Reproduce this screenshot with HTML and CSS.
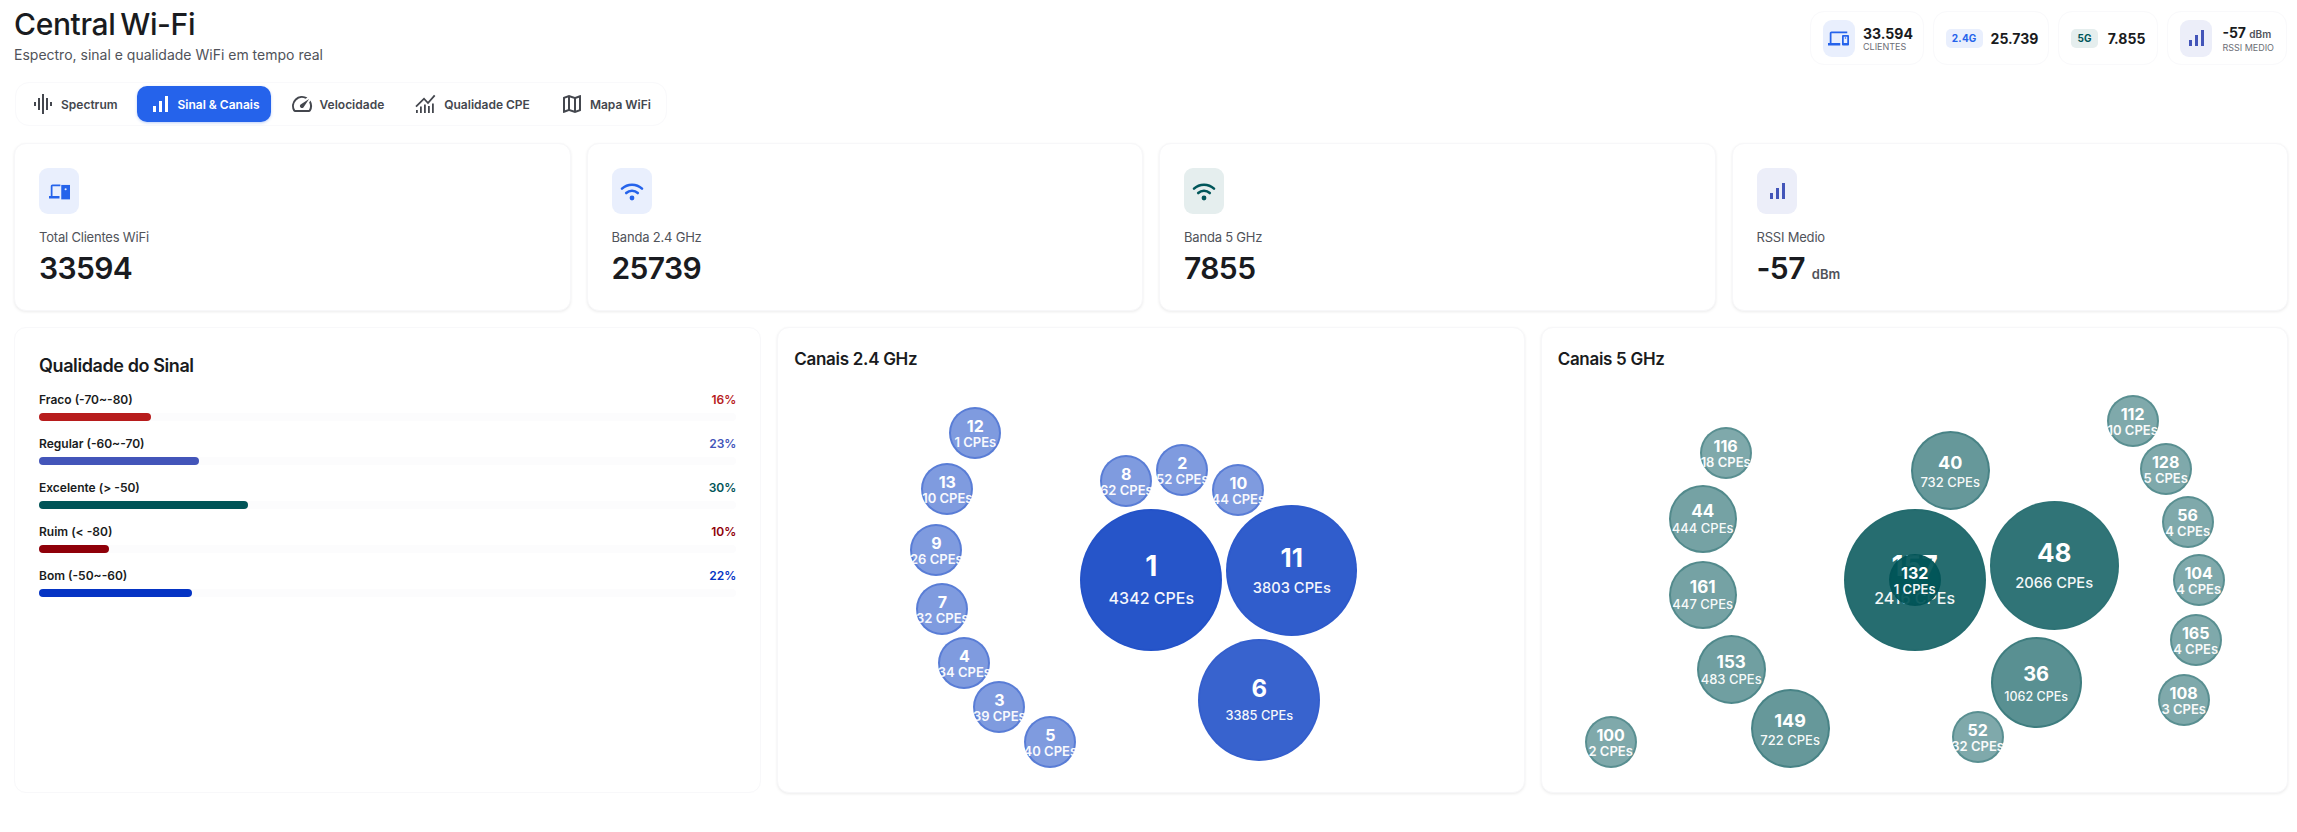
FILE: index.html
```html
<!DOCTYPE html>
<html lang="pt-BR">
<head>
  <meta charset="UTF-8">
  <title>Central Wi-Fi</title>
  <meta name="viewport" content="width=device-width, initial-scale=1.0">
  <link rel="stylesheet" href="styles.css">
</head>
<body>
<div class="page">

  <header class="top">
    <div class="top-title">
      <h1>Central Wi-Fi</h1>
      <p>Espectro, sinal e qualidade WiFi em tempo real</p>
    </div>
    <div class="top-stats">
      <div class="chip tight">
        <span class="chip-icon blue"><svg class="dev" viewBox="0 0 24 24"><path d="M4 6h18V4H4c-1.1 0-2 .9-2 2v11H0v3h14v-3H4V6zm19 2h-6c-.55 0-1 .45-1 1v10c0 .55.45 1 1 1h6c.55 0 1-.45 1-1V9c0-.55-.45-1-1-1zm-1 9h-4v-7h4v7z"/><circle cx="20" cy="11.5" r=".9"/></svg></span>
        <div><b>33.594</b><small>CLIENTES</small></div>
      </div>
      <div class="chip tight">
        <span class="chip-badge blue">2.4G</span>
        <b>25.739</b>
      </div>
      <div class="chip">
        <span class="chip-badge teal">5G</span>
        <b>7.855</b>
      </div>
      <div class="chip">
        <span class="chip-icon indigo"><svg viewBox="0 0 24 24"><path d="M17 4h3v16h-3V4zM5 14h3v6H5v-6zm6-5h3v11h-3V9z"/></svg></span>
        <div><b>-57 <em>dBm</em></b><small>RSSI MEDIO</small></div>
      </div>
    </div>
  </header>

  <nav class="tabs">
    <button class="tab"><svg viewBox="0 0 24 24"><path d="M7 18h2V6H7v12zm4 4h2V2h-2v20zm-8-8h2v-4H3v4zm12 4h2V6h-2v12zm4-8v4h2v-4h-2z"/></svg>Spectrum</button>
    <button class="tab active"><svg viewBox="0 0 24 24"><path d="M17 4h3v16h-3V4zM5 14h3v6H5v-6zm6-5h3v11h-3V9z"/></svg>Sinal &amp; Canais</button>
    <button class="tab"><svg viewBox="0 0 24 24"><path d="M20.38 8.57l-1.23 1.85a8 8 0 0 1-.22 7.58H5.07A8 8 0 0 1 15.58 6.85l1.85-1.23A10 10 0 0 0 3.35 19a2 2 0 0 0 1.72 1h13.85a2 2 0 0 0 1.74-1 10 10 0 0 0-.27-10.44zm-9.79 6.84a2 2 0 0 0 2.83 0l5.66-8.49-8.49 5.66a2 2 0 0 0 0 2.83z"/></svg>Velocidade</button>
    <button class="tab"><svg viewBox="0 0 24 24"><path d="M2 14.6l8-7.9 4 4.3 6.7-7.7" fill="none" stroke="currentColor" stroke-width="1.8"/><path d="M2 18h1.8v3H2zM6 14.5h1.8V21H6zM10 12.5h1.8V21H10zM14 14h1.8v7H14zM18 11.5h1.8V21H18z"/></svg>Qualidade CPE</button>
    <button class="tab"><svg viewBox="0 0 24 24"><path d="M20.5 3l-.16.03L15 5.1 9 3 3.36 4.9c-.21.07-.36.25-.36.48V20.5c0 .28.22.5.5.5l.16-.03L9 18.9l6 2.1 5.64-1.9c.21-.07.36-.25.36-.48V3.5c0-.28-.22-.5-.5-.5zM10 5.47l4 1.4v11.66l-4-1.4V5.47zm-5 .99l3-1.01v11.7l-3 1.16V6.46zm14 11.08l-3 1.01V6.86l3-1.16v11.84z"/></svg>Mapa WiFi</button>
  </nav>

  <section class="stat-row">
    <div class="card stat">
      <span class="stat-icon blue"><svg class="dev" viewBox="0 0 24 24"><path d="M4 6h9V4H4c-1.1 0-2 .9-2 2v11H0v3h12v-3H4V6z"/><path d="M14 4.5h10V21H14z"/><circle cx="19" cy="9.500" r="1.200" fill="#e9effd"/></svg></span>
      <div class="stat-label">Total Clientes WiFi</div>
      <div class="stat-value">33594</div>
    </div>
    <div class="card stat">
      <span class="stat-icon blue"><svg viewBox="0 0 24 24"><path class="arc" d="M2 9.6c5.600-5.200 14.400-5.200 20 0M6.200 14c3.300-3 8.300-3 11.600 0"/><circle cx="12" cy="19" r="2.400"/></svg></span>
      <div class="stat-label">Banda 2.4 GHz</div>
      <div class="stat-value">25739</div>
    </div>
    <div class="card stat">
      <span class="stat-icon teal"><svg viewBox="0 0 24 24"><path class="arc" d="M2 9.6c5.600-5.200 14.400-5.200 20 0M6.200 14c3.300-3 8.300-3 11.600 0"/><circle cx="12" cy="19" r="2.400"/></svg></span>
      <div class="stat-label">Banda 5 GHz</div>
      <div class="stat-value">7855</div>
    </div>
    <div class="card stat">
      <span class="stat-icon indigo"><svg viewBox="0 0 24 24"><path d="M17 4h3v16h-3V4zM5 14h3v6H5v-6zm6-5h3v11h-3V9z"/></svg></span>
      <div class="stat-label">RSSI Medio</div>
      <div class="stat-value">-57 <em>dBm</em></div>
    </div>
  </section>

  <section class="panel-row">
    <div class="card quality">
      <h2>Qualidade do Sinal</h2>
      <div class="q-row fraco"><div class="q-head"><span>Fraco (-70~-80)</span><b>16%</b></div><div class="q-track"><div class="q-bar" style="width:16%"></div></div></div>
      <div class="q-row regular"><div class="q-head"><span>Regular (-60~-70)</span><b>23%</b></div><div class="q-track"><div class="q-bar" style="width:23%"></div></div></div>
      <div class="q-row excelente"><div class="q-head"><span>Excelente (&gt; -50)</span><b>30%</b></div><div class="q-track"><div class="q-bar" style="width:30%"></div></div></div>
      <div class="q-row ruim"><div class="q-head"><span>Ruim (&lt; -80)</span><b>10%</b></div><div class="q-track"><div class="q-bar" style="width:10%"></div></div></div>
      <div class="q-row bom"><div class="q-head"><span>Bom (-50~-60)</span><b>22%</b></div><div class="q-track"><div class="q-bar" style="width:22%"></div></div></div>
    </div>

    <div class="card channels">
      <h3>Canais 2.4 GHz</h3>
      <div class="bubbles band24">
        <div class="bubble b-xl" style="--x:286px;--y:135px;--d:142px;--a:.85"><b>1</b><span>4342 CPEs</span></div>
        <div class="bubble b-lg" style="--x:432px;--y:131px;--d:131px;--a:.81"><b>11</b><span>3803 CPEs</span></div>
        <div class="bubble b-ml" style="--x:404px;--y:265px;--d:122px;--a:.78"><b>6</b><span>3385 CPEs</span></div>
        <div class="bubble" style="--x:155px;--y:33px;--d:52px;--a:.5"><b>12</b><span>1 CPEs</span></div>
        <div class="bubble" style="--x:127px;--y:89px;--d:52px;--a:.5"><b>13</b><span>10 CPEs</span></div>
        <div class="bubble" style="--x:116px;--y:150px;--d:52px;--a:.5"><b>9</b><span>26 CPEs</span></div>
        <div class="bubble" style="--x:122px;--y:209px;--d:52px;--a:.5"><b>7</b><span>32 CPEs</span></div>
        <div class="bubble" style="--x:144px;--y:263px;--d:52px;--a:.5"><b>4</b><span>34 CPEs</span></div>
        <div class="bubble" style="--x:179px;--y:307px;--d:52px;--a:.5"><b>3</b><span>39 CPEs</span></div>
        <div class="bubble" style="--x:230px;--y:342px;--d:52px;--a:.5"><b>5</b><span>40 CPEs</span></div>
        <div class="bubble" style="--x:306px;--y:81px;--d:52px;--a:.5"><b>8</b><span>62 CPEs</span></div>
        <div class="bubble" style="--x:362px;--y:70px;--d:52px;--a:.5"><b>2</b><span>52 CPEs</span></div>
        <div class="bubble" style="--x:418px;--y:90px;--d:52px;--a:.5"><b>10</b><span>44 CPEs</span></div>
      </div>
    </div>

    <div class="card channels">
      <h3>Canais 5 GHz</h3>
      <div class="bubbles band5">
        <div class="bubble b-xl" style="--x:286px;--y:135px;--d:142px;--a:.85"><b>157</b><span>2416 CPEs</span></div>
        <div class="bubble b-lg" style="--x:432px;--y:127px;--d:129px;--a:.81"><b>48</b><span>2066 CPEs</span></div>
        <div class="bubble b-md" style="--x:433px;--y:263px;--d:91px;--a:.65"><b>36</b><span>1062 CPEs</span></div>
        <div class="bubble b-ms" style="--x:353px;--y:57px;--d:79px;--a:.6"><b>40</b><span>732 CPEs</span></div>
        <div class="bubble b-ms" style="--x:193px;--y:315px;--d:79px;--a:.6"><b>149</b><span>722 CPEs</span></div>
        <div class="bubble b-s" style="--x:139px;--y:261px;--d:69px;--a:.56"><b>153</b><span>483 CPEs</span></div>
        <div class="bubble b-s" style="--x:111px;--y:187px;--d:68px;--a:.54"><b>161</b><span>447 CPEs</span></div>
        <div class="bubble b-s" style="--x:111px;--y:111px;--d:68px;--a:.54"><b>44</b><span>444 CPEs</span></div>
        <div class="bubble" style="--x:142px;--y:53px;--d:52px;--a:.5"><b>116</b><span>18 CPEs</span></div>
        <div class="bubble" style="--x:27px;--y:342px;--d:52px;--a:.5"><b>100</b><span>2 CPEs</span></div>
        <div class="bubble" style="--x:394px;--y:337px;--d:52px;--a:.5"><b>52</b><span>32 CPEs</span></div>
        <div class="bubble" style="--x:549px;--y:21px;--d:52px;--a:.5"><b>112</b><span>10 CPEs</span></div>
        <div class="bubble" style="--x:582px;--y:69px;--d:52px;--a:.5"><b>128</b><span>5 CPEs</span></div>
        <div class="bubble" style="--x:604px;--y:122px;--d:52px;--a:.5"><b>56</b><span>4 CPEs</span></div>
        <div class="bubble" style="--x:615px;--y:180px;--d:52px;--a:.5"><b>104</b><span>4 CPEs</span></div>
        <div class="bubble" style="--x:612px;--y:240px;--d:52px;--a:.5"><b>165</b><span>4 CPEs</span></div>
        <div class="bubble" style="--x:600px;--y:300px;--d:52px;--a:.5"><b>108</b><span>3 CPEs</span></div>
        <div class="bubble" style="--x:331px;--y:180px;--d:52px;--a:.93"><b>132</b><span>1 CPEs</span></div>
      </div>
    </div>
  </section>

</div>
</body>
</html>
```

FILE: styles.css
```css
* { box-sizing: border-box; }
html, body { margin: 0; height: 100%; }
body { background: #fff; color: #191b20; font-family: Inter, "Liberation Sans", sans-serif; overflow: hidden; }
svg { display: block; width: 24px; height: 24px; fill: currentColor; flex: none; }
svg.dev { width: 21px; height: 21px; }
em { font-style: normal; }

.page { padding: 6px 9px 0 14px; }

/* header */
.top { display: flex; justify-content: space-between; align-items: flex-start; height: 59px; }
.top-title h1 { margin: 0; font-size: 30px; line-height: 36px; font-weight: 500; letter-spacing: -.35px; word-spacing: -3px; }
.top-title p { margin: 3px 0 0; font-size: 14px; line-height: 20px; color: #50535a; }
.top-stats { display: flex; gap: 9px; margin-top: 5px; margin-right: 1px; }
.chip { display: flex; align-items: center; gap: 10px; height: 54px; padding: 0 12px; border: 1px solid #f9f9fb; border-radius: 14px; }
.chip.tight { gap: 8px; padding-right: 10px; }
.chip b { display: block; font-size: 14px; line-height: 17px; font-weight: 700; }
.chip b em { font-size: 10px; font-weight: 600; color: #50535a; }
.chip small { display: block; font-size: 9px; line-height: 10px; color: #6b6e76; }
.chip-icon { width: 32px; height: 37px; border-radius: 9px; display: flex; align-items: center; justify-content: center; }
.chip-badge { padding: 0 6px; height: 19px; border-radius: 5px; font-size: 10px; font-weight: 700; line-height: 19px; letter-spacing: .2px; }
.blue { background: #e9effd; color: #2563eb; }
.teal { background: #e5eeee; color: #00565a; }
.indigo { background: #eceef9; color: #4355b9; }

/* tabs */
.tabs { display: inline-flex; gap: 8px; margin: 17px 0 17px 1px; padding: 3px 4px; height: 44px; border: 1px solid #f9f9fb; border-radius: 14px; vertical-align: top; }
.tab { display: flex; align-items: center; gap: 6px; padding: 0 11px; border: 0; border-radius: 10px; background: none; color: #44474e; font: 600 12px Inter, "Liberation Sans", sans-serif; white-space: nowrap; cursor: pointer; }
.tab.active { background: #2563eb; color: #fff; box-shadow: 0 1px 3px rgba(37, 99, 235, .3); }

/* cards */
.card { background: #fff; border: 1px solid #f7f7f9; border-radius: 12px; box-shadow: 0 1px 3px rgba(0, 0, 0, .08); }
.stat-row { display: grid; grid-template-columns: repeat(4, 1fr); gap: 16px; }
.stat { height: 168px; padding: 24px; }
.stat-icon { display: flex; align-items: center; justify-content: center; width: 40px; height: 46px; border-radius: 9px; }
.stat-label { margin-top: 13px; font-size: 13px; line-height: 20px; color: #50535a; letter-spacing: -.2px; }
.stat-value { margin-top: 2px; font-size: 30px; line-height: 38px; font-weight: 600; letter-spacing: -.6px; }
.stat-value em { font-size: 13px; font-weight: 600; color: #50535a; letter-spacing: 0; }
.arc { fill: none; stroke: currentColor; stroke-width: 2.6; stroke-linecap: round; }

/* bottom panels */
.panel-row { display: grid; grid-template-columns: repeat(3, 1fr); gap: 16px; margin-top: 16px; }
.panel-row .card { height: 466px; }
.panel-row .quality { padding: 24px; box-shadow: none; border-color: #f8f8fa; }
.quality h2 { margin: 0 0 11px; font-size: 18px; line-height: 28px; font-weight: 600; letter-spacing: -.4px; }
.q-row { margin-bottom: 14px; }
.q-head { display: flex; justify-content: space-between; font-size: 12px; line-height: 18px; font-weight: 600; }
.q-head b { font-weight: 600; }
.q-track { margin-top: 4px; height: 8px; border-radius: 4px; background: #fcfcfd; }
.q-bar { height: 8px; border-radius: 4px; background: currentColor; }
.fraco .q-track, .fraco b { color: #b71c1c; }
.regular .q-track, .regular b { color: #4355b9; }
.excelente .q-track, .excelente b { color: #005457; }
.ruim .q-track, .ruim b { color: #8f0009; }
.bom .q-track, .bom b { color: #0534c4; }

.channels { padding: 16px; }
.channels h3 { margin: 0; font-size: 17px; line-height: 30px; font-weight: 600; letter-spacing: -.3px; }
.bubbles { position: relative; height: 400px; }
.band24 { --rgb: 0 55 192; }
.band5 { --rgb: 0 84 87; }

.bubble { position: absolute; left: var(--x); top: var(--y); width: var(--d); height: var(--d); display: flex; flex-direction: column; align-items: center; justify-content: center; border-radius: 50%; border: 2px solid rgb(var(--rgb) / .3); background: rgb(var(--rgb) / var(--a)); color: #fff; white-space: nowrap; }
.bubble b { font-size: 16px; line-height: 18px; font-weight: 700; }
.bubble span { font-size: 13px; line-height: 14px; font-weight: 600; opacity: .95; }
.b-xl, .b-lg, .b-ml { padding-bottom: 3px; border-color: rgb(var(--rgb) / .08); }
.bubble.b-xl b { font-size: 28px; line-height: 34px; }
.bubble.b-xl span { font-size: 16px; line-height: 20px; margin-top: 5px; font-weight: 500; }
.bubble.b-lg b { font-size: 26px; line-height: 32px; }
.bubble.b-lg span { font-size: 14.7px; line-height: 18px; margin-top: 5px; font-weight: 500; }
.bubble.b-ml b { font-size: 24px; line-height: 30px; }
.bubble.b-ml span { font-size: 12.8px; line-height: 17px; margin-top: 3px; font-weight: 500; }
.bubble.b-md b { font-size: 20px; line-height: 26px; }
.bubble.b-md span { font-size: 12.5px; line-height: 16px; margin-top: 2px; font-weight: 500; }
.bubble.b-ms b { font-size: 18px; line-height: 22px; }
.bubble.b-ms span { font-size: 13px; line-height: 16px; font-weight: 500; }
.bubble.b-s b { font-size: 17px; line-height: 19px; }
.bubble.b-s span { font-size: 13px; line-height: 15px; font-weight: 500; }
```
